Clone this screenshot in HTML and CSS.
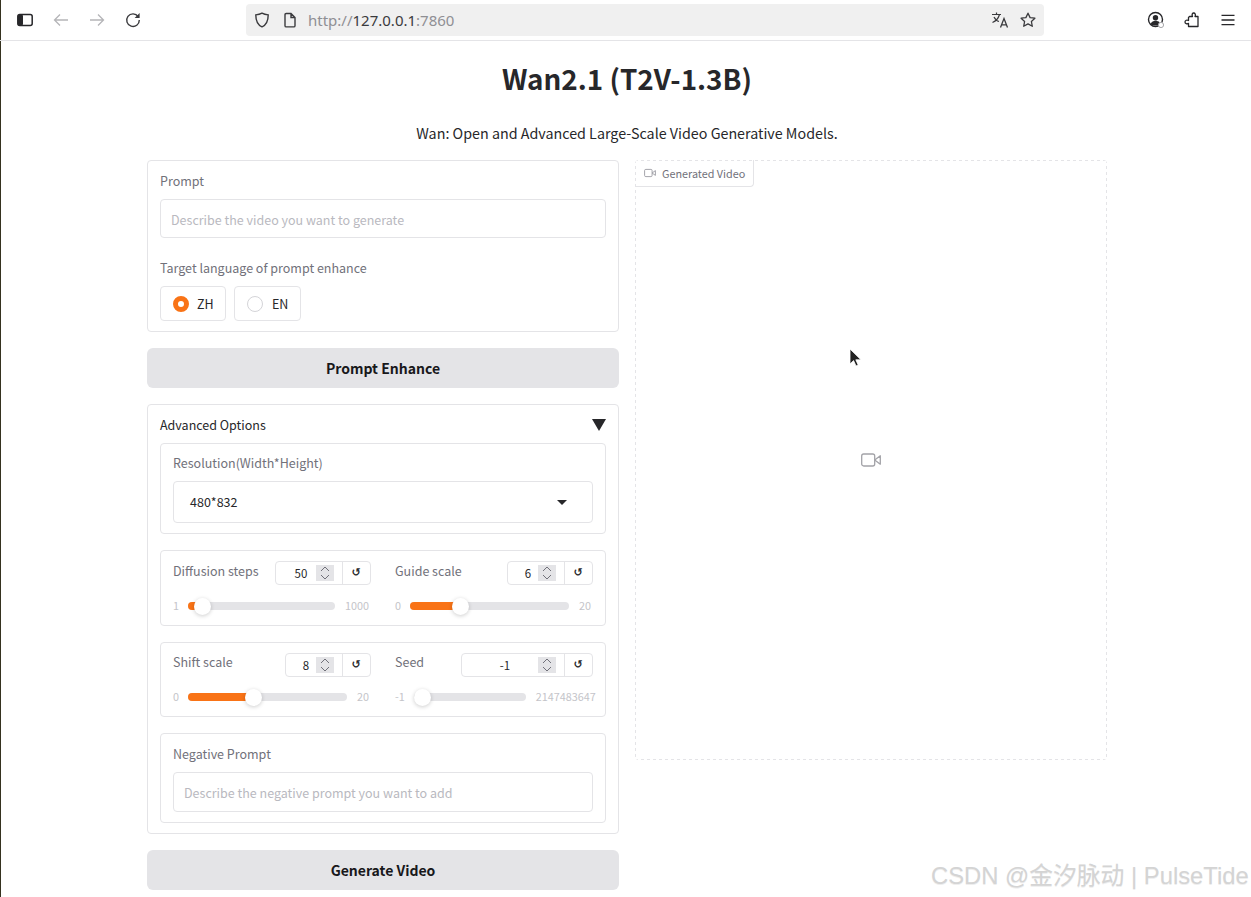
FILE: index.html
```html
<!DOCTYPE html>
<html lang="en">
<head>
<meta charset="utf-8">
<title>Wan2.1 (T2V-1.3B)</title>
<link rel="stylesheet" href="styles.css">
</head>
<body>
<header class="toolbar">
  <div class="tool-group">
    <span class="tool"><svg width="16" height="16" viewBox="0 0 16 16"><rect x="0.800" y="2.500" width="14.400" height="11" rx="2" fill="none" stroke="#27272a" stroke-width="1.500"/><rect x="1" y="2.500" width="5" height="11" rx="1.500" fill="#27272a"/></svg></span>
    <span class="tool"><svg width="16" height="16" viewBox="0 0 16 16"><path d="M15 8H1.500M7 2.500 1.500 8 7 13.500" fill="none" stroke="#b5b5b8" stroke-width="1.300"/></svg></span>
    <span class="tool"><svg width="16" height="16" viewBox="0 0 16 16"><path d="M1 8h13.500M9 2.500 14.500 8 9 13.500" fill="none" stroke="#b5b5b8" stroke-width="1.300"/></svg></span>
    <span class="tool"><svg width="16" height="16" viewBox="0 0 16 16"><path d="M13.200 4.600A6.300 6.300 0 1 0 14.300 8" fill="none" stroke="#3a3a3d" stroke-width="1.400"/><path d="M14.600 1v5h-5z" fill="#3a3a3d"/></svg></span>
  </div>
  <div class="urlbar">
    <svg class="url-shield" width="16" height="16" viewBox="0 0 16 16"><path d="M8 1.200c2 1.200 4 1.600 6.200 1.700 0 5.500-1.500 9.800-6.200 11.900C3.300 12.700 1.800 8.400 1.800 2.900 4 2.800 6 2.400 8 1.200z" fill="none" stroke="#3a3a3d" stroke-width="1.400"/></svg>
    <svg class="url-page" width="16" height="16" viewBox="0 0 16 16"><path d="M3 2.700A1.200 1.200 0 0 1 4.200 1.500H9l4 4v8.200a1.200 1.200 0 0 1-1.200 1.200H4.200A1.200 1.200 0 0 1 3 13.700zM9 1.500v4h4" fill="none" stroke="#3a3a3d" stroke-width="1.400"/></svg>
    <span class="url"><span class="url-dim">http://</span>127.0.0.1<span class="url-dim">:7860</span></span>
    <span class="url-spacer"></span>
    <svg class="url-translate" width="18" height="18" viewBox="0 0 18 18"><path d="M1 3.500h9M5.500 1.500v2M8.500 3.500C7.500 7 5 10 1.500 11.500M3 6c1 2 3 4 5 4.500" fill="none" stroke="#3a3a3d" stroke-width="1.200"/><path d="M9.500 16.500 13 7.500l3.500 9M10.700 13.800h4.600" fill="none" stroke="#3a3a3d" stroke-width="1.300"/></svg>
    <svg class="url-star" width="16" height="16" viewBox="0 0 16 16"><path d="M8 1.200l2.100 4.400 4.800.6-3.500 3.300.9 4.800L8 11.900l-4.300 2.400.9-4.800L1.100 6.200l4.800-.6z" fill="none" stroke="#3a3a3d" stroke-width="1.300" stroke-linejoin="round"/></svg>
  </div>
  <div class="tool-spacer"></div>
  <div class="tool-group">
    <span class="tool"><svg width="18" height="18" viewBox="0 0 18 18"><circle cx="8.500" cy="8.500" r="7" fill="none" stroke="#27272a" stroke-width="1.400"/><circle cx="8.500" cy="6.800" r="2.700" fill="#27272a"/><path d="M3.500 13c1-2.500 3-3.300 5-3.300 1.500 0 3 .5 4 1.500v3.300H5z" fill="#27272a"/><circle cx="14" cy="14" r="2.600" fill="#fff" stroke="#a8a8ab" stroke-width="1"/></svg></span>
    <span class="tool"><svg width="16" height="16" viewBox="0 0 16 16"><path d="M5.500 4.500H8.500C7.800 3 8 1.200 9.500 1s2.500 1.800 1.500 3.500h3v10H4.500v-3.200c-1.500 1-3.500.4-3.500-1.300S3 7.500 4.500 8.500V5.500z" fill="none" stroke="#27272a" stroke-width="1.300" stroke-linejoin="round"/></svg></span>
    <span class="tool"><svg width="16" height="16" viewBox="0 0 16 16"><path d="M1.500 3.300h13M1.500 8h13M1.500 12.700h13" fill="none" stroke="#27272a" stroke-width="1.300"/></svg></span>
  </div>
</header>

<main class="page">
  <h1 class="title">Wan2.1 (T2V-1.3B)</h1>
  <p class="subtitle">Wan: Open and Advanced Large-Scale Video Generative Models.</p>

  <div class="columns">
    <section class="col">
      <div class="box box-prompt">
        <div class="label">Prompt</div>
        <div class="textbox placeholder">Describe the video you want to generate</div>
        <div class="label label-lang">Target language of prompt enhance</div>
        <div class="radios">
          <span class="radio radio-zh"><span class="dot dot-on"></span>ZH</span>
          <span class="radio radio-en"><span class="dot"></span>EN</span>
        </div>
      </div>

      <button class="btn">Prompt Enhance</button>

      <div class="box box-adv">
        <div class="adv-head"><span>Advanced Options</span><span class="adv-arrow"></span></div>
        <div class="adv-body">
          <div class="box inner res">
            <div class="label">Resolution(Width*Height)</div>
            <div class="select"><span>480*832</span><span class="select-arrow"></span></div>
          </div>

          <div class="box inner sliders">
            <div class="slider">
              <div class="slider-top">
                <span class="label">Diffusion steps</span>
                <div class="num num-50"><span class="num-val">50</span><span class="spin"><svg width="10" height="14" viewBox="0 0 10 14"><path d="M1 5l4-4 4 4M1 9l4 4 4-4" fill="none" stroke="#71717a" stroke-width="1"/></svg></span><span class="reset">↺</span></div>
              </div>
              <div class="slider-row">
                <span class="lim lim-min">1</span>
                <div class="track"><div class="fill" style="width:10%"></div><div class="thumb" style="left:10%"></div></div>
                <span class="lim lim-max">1000</span>
              </div>
            </div>
            <div class="slider">
              <div class="slider-top">
                <span class="label">Guide scale</span>
                <div class="num num-6"><span class="num-val">6</span><span class="spin"><svg width="10" height="14" viewBox="0 0 10 14"><path d="M1 5l4-4 4 4M1 9l4 4 4-4" fill="none" stroke="#71717a" stroke-width="1"/></svg></span><span class="reset">↺</span></div>
              </div>
              <div class="slider-row">
                <span class="lim lim-min">0</span>
                <div class="track"><div class="fill" style="width:32%"></div><div class="thumb" style="left:32%"></div></div>
                <span class="lim lim-max">20</span>
              </div>
            </div>
          </div>

          <div class="box inner sliders sliders-b">
            <div class="slider">
              <div class="slider-top">
                <span class="label">Shift scale</span>
                <div class="num num-8"><span class="num-val">8</span><span class="spin"><svg width="10" height="14" viewBox="0 0 10 14"><path d="M1 5l4-4 4 4M1 9l4 4 4-4" fill="none" stroke="#71717a" stroke-width="1"/></svg></span><span class="reset">↺</span></div>
              </div>
              <div class="slider-row">
                <span class="lim lim-min">0</span>
                <div class="track"><div class="fill" style="width:41%"></div><div class="thumb" style="left:41%"></div></div>
                <span class="lim lim-max">20</span>
              </div>
            </div>
            <div class="slider">
              <div class="slider-top">
                <span class="label">Seed</span>
                <div class="num num-seed"><span class="num-val">-1</span><span class="spin"><svg width="10" height="14" viewBox="0 0 10 14"><path d="M1 5l4-4 4 4M1 9l4 4 4-4" fill="none" stroke="#71717a" stroke-width="1"/></svg></span><span class="reset">↺</span></div>
              </div>
              <div class="slider-row">
                <span class="lim lim-min">-1</span>
                <div class="track track-seed"><div class="thumb thumb-start"></div></div>
                <span class="lim lim-max">2147483647</span>
              </div>
            </div>
          </div>

          <div class="box inner neg">
            <div class="label">Negative Prompt</div>
            <div class="textbox placeholder">Describe the negative prompt you want to add</div>
          </div>
        </div>
      </div>

      <button class="btn">Generate Video</button>
    </section>

    <section class="col">
      <div class="video">
        <div class="video-tag"><svg width="12" height="12" viewBox="0 0 20 20"><rect x="1" y="4" width="12.500" height="12" rx="2" fill="none" stroke="#9a9aa1" stroke-width="1.500"/><path d="M13.500 10 19 6v8z" fill="none" stroke="#9a9aa1" stroke-width="1.500" stroke-linejoin="round"/></svg><span>Generated Video</span></div>
        <svg class="video-icon" width="20" height="20" viewBox="0 0 20 20"><rect x="0.700" y="4" width="13" height="12" rx="2" fill="none" stroke="#a3a3a8" stroke-width="1.300"/><path d="M13.700 10 19.300 5.800v8.400z" fill="none" stroke="#a3a3a8" stroke-width="1.300" stroke-linejoin="round"/></svg>
      </div>
    </section>
  </div>
</main>

<svg class="cursor" width="14" height="22" viewBox="0 0 14 22"><path d="M1 1v15l3.600-3.400 2.400 5.400 2.200-1-2.400-5.200H12z" fill="#222" stroke="#fff" stroke-width="0.800"/></svg>
<div class="watermark">CSDN @金汐脉动 | PulseTide</div>
</body>
</html>
```
FILE: styles.css
```css
* { box-sizing: border-box; }
html, body { height: 100%; overflow: hidden; }
body {
  margin: 0;
  background: #fff;
  box-shadow: inset 1px 0 0 #35321f;
  color: #27272a;
  font-family: "Noto Sans CJK SC", "Noto Sans", sans-serif;
  font-size: 12.500px;
  line-height: 20px;
}

/* Browser chrome */
.toolbar {
  display: flex;
  align-items: center;
  height: 41px;
  padding-left: 7px;
  padding-right: 5px;
  border-bottom: 1px solid #e4e4e7;
}
.tool-group { display: flex; }
.tool { display: flex; width: 36px; height: 36px; align-items: center; justify-content: center; }
.tool svg { display: block; }
.urlbar {
  display: flex;
  align-items: center;
  width: 798px;
  height: 32px;
  margin-left: 95px;
  padding: 0 8px;
  background: #f0f0f0;
  border-radius: 4px;
}
.url-page { margin-left: 12px; }
.url {
  margin-left: 10px;
  font-family: "Noto Sans", sans-serif;
  font-size: 15px;
  color: #3a3a3d;
}
.url-dim { color: #8f8f94; }
.url-spacer { flex: 1; }
.url-star { margin-left: 11px; }
.tool-spacer { flex: 1; }

/* Page */
.page { width: 960px; margin-left: 147px; }
.title {
  margin: 0;
  padding-top: 18px;
  font-size: 27.800px;
  line-height: 38px;
  font-weight: 600;
  text-align: center;
}
.subtitle {
  margin: 24px 0 0;
  font-size: 14.300px;
  line-height: 24px;
  text-align: center;
}
.columns { display: flex; gap: 16px; margin-top: 15px; }
.col { display: flex; flex-direction: column; gap: 16px; width: 472px; }

.box {
  border: 1px solid #e4e4e7;
  border-radius: 4px;
  background: #fff;
}
.box-prompt { height: 172px; padding: 10px 12px; }
.label { color: #71717a; font-size: 12.500px; line-height: 20px; }
.textbox {
  height: 39px;
  margin-top: 8px;
  padding: 0 10px;
  border: 1px solid #e4e4e7;
  border-radius: 4px;
  line-height: 39px;
}
.placeholder { color: #b9b9c0; }
.label-lang { margin-top: 20px; }
.radios { display: flex; gap: 8px; margin-top: 8px; }
.radio {
  display: flex;
  align-items: center;
  height: 35px;
  padding: 0 12px;
  gap: 8px;
  border: 1px solid #e4e4e7;
  border-radius: 4px;
  color: #27272a;
}
.dot { flex: none; width: 16px; height: 16px; border-radius: 50%; border: 1px solid #d4d4d8; background: #fff; }
.dot-on { border: 5px solid #f97316; }
.radio-zh { width: 66px; }
.radio-en { width: 67px; gap: 9px; }

.btn {
  display: block;
  width: 100%;
  height: 40px;
  padding: 0;
  border: 0;
  border-radius: 6px;
  background: #e4e4e7;
  color: #18181b;
  font: 600 14px/40px "Noto Sans CJK SC", sans-serif;
}

.box-adv { height: 430px; padding: 10px 12px; }
.adv-head {
  display: flex;
  align-items: center;
  justify-content: space-between;
  height: 20px;
  color: #27272a;
}
.adv-arrow {
  width: 0;
  height: 0;
  border-left: 7px solid transparent;
  border-right: 7px solid transparent;
  border-top: 12px solid #27272a;
}
.adv-body { display: flex; flex-direction: column; gap: 16px; margin-top: 8px; }
.inner { padding: 10px 12px; }
.res { height: 91px; padding-top: 9px; }
.select {
  display: flex;
  align-items: center;
  justify-content: space-between;
  height: 42px;
  margin-top: 8px;
  padding: 0 25px 0 16px;
  border: 1px solid #e4e4e7;
  border-radius: 4px;
  color: #27272a;
}
.select-arrow {
  width: 0;
  height: 0;
  border-left: 5px solid transparent;
  border-right: 5px solid transparent;
  border-top: 5px solid #27272a;
}

.sliders { display: flex; gap: 24px; height: 76px; }
.sliders-b { height: 75px; padding-top: 9px; }
.sliders-b .num { margin-top: 1px; }
.slider { flex: 1; min-width: 0; }
.slider-top { display: flex; justify-content: space-between; height: 24px; }
.num {
  display: flex;
  align-items: center;
  height: 24px;
  border: 1px solid #e4e4e7;
  border-radius: 4px;
  color: #27272a;
  font-size: 11.500px;
}
.num-val { flex: 1; text-align: center; padding-left: 10px; }
.spin {
  display: flex;
  align-items: center;
  justify-content: center;
  width: 18px;
  height: 16px;
  margin-right: 8px;
  background: #e4e4e7;
}
.spin svg { display: block; }
.reset {
  width: 28px;
  height: 22px;
  padding-right: 1px;
  border-left: 1px solid #e4e4e7;
  color: #27272a;
  font: 700 11px/22px "DejaVu Sans", sans-serif;
  text-align: center;
}
.num-50 { width: 96px; }
.num-6 { width: 86px; }
.num-8 { width: 86px; }
.num-seed { width: 132px; }

.slider-row { display: flex; align-items: center; height: 18px; margin-top: 12px; padding-right: 2px; }
.lim { margin-top: -2px; color: #c4c4c9; font-size: 10.800px; line-height: 18px; white-space: nowrap; }
.lim-min { margin-right: 9px; }
.lim-max { margin-left: 10px; }
.track {
  position: relative;
  flex: 1;
  height: 8px;
  border-radius: 4px;
  background: #e4e4e7;
}
.fill { height: 8px; border-radius: 4px; background: #f97316; }
.thumb {
  position: absolute;
  top: -4.500px;
  width: 17px;
  height: 17px;
  margin-left: -8.500px;
  border-radius: 50%;
  background: #fff;
  box-shadow: 0 1px 4px rgba(0, 0, 0, .2);
}
.track-seed { flex: none; width: 112px; }
.thumb-start { left: 8px; margin-left: -8px; }

.neg { height: 90px; }
.neg .textbox { height: 40px; line-height: 40px; }

/* Video pane */
.video {
  position: relative;
  display: flex;
  align-items: center;
  justify-content: center;
  height: 600px;
  border-radius: 4px;
  background:
    repeating-linear-gradient(90deg, #e4e4e7 0 3px, transparent 3px 6px) top / 100% 1px no-repeat,
    repeating-linear-gradient(90deg, #e4e4e7 0 3px, transparent 3px 6px) bottom / 100% 1px no-repeat,
    repeating-linear-gradient(180deg, #e4e4e7 0 3px, transparent 3px 6px) left / 1px 100% no-repeat,
    repeating-linear-gradient(180deg, #e4e4e7 0 3px, transparent 3px 6px) right / 1px 100% no-repeat;
}
.video-tag {
  position: absolute;
  top: 0;
  left: 0;
  display: flex;
  align-items: center;
  gap: 6px;
  height: 27px;
  padding: 0 8px 0 9px;
  border-right: 1px solid #e4e4e7;
  border-bottom: 1px solid #e4e4e7;
  border-radius: 0 0 4px 0;
  color: #71717a;
  font-size: 10.800px;
}
.video-tag svg { display: block; }

/* Overlays */
.cursor { position: absolute; left: 849px; top: 348px; }
.watermark {
  position: absolute;
  left: 931px;
  top: 860px;
  color: #d4d4d4;
  font-family: "Liberation Sans", "Noto Sans CJK SC", sans-serif;
  font-size: 23.800px;
  line-height: 32px;
  white-space: nowrap;
  text-shadow: 0 1px 0 #eee;
}
```
